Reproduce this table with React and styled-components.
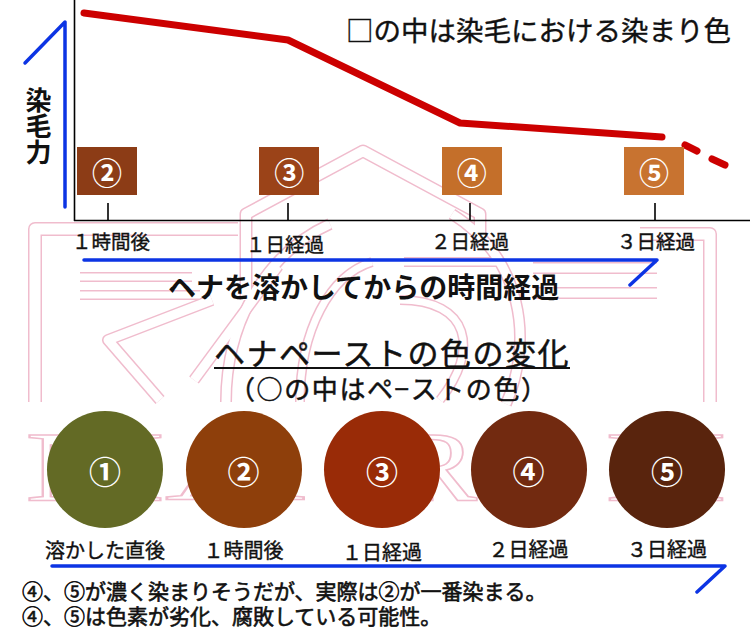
import React from 'react';
import styled, { createGlobalStyle } from 'styled-components';

const GlobalStyle = createGlobalStyle`
    html, body {
        margin: 0;
        padding: 0;
        background: #FFF;
    }
    body {
        font-family: "Noto Sans CJK JP", "Noto Sans", sans-serif;
        color: #111;
    }
`;

const Page = styled.div`
    position: relative;
    width: 750px;
    height: 632px;
    overflow: hidden;
    background: #FFF;
`;

const Watermark = styled.svg`
    position: absolute;
    left: 0;
    top: 0;
    z-index: 0;
`;

const Content = styled.div`
    position: relative;
    z-index: 1;
    display: flex;
    flex-direction: column;
`;

// stacks every child in the same grid cell
const Layered = styled.div`
    display: grid;
    height: ${props => props.$h}px;
    & > * {
        grid-area: 1 / 1;
    }
`;

const Drawing = styled.svg`
    display: block;
`;

const AxisTitle = styled.div`
    justify-self: start;
    align-self: start;
    margin: 87px 0 0 25px;
    writing-mode: vertical-rl;
    font-size: 26px;
    line-height: 1;
    font-weight: 700;
`;

const Legend = styled.div`
    justify-self: end;
    align-self: start;
    margin: 16px 19px 0 0;
    font-size: 27.5px;
    line-height: 1;
    -webkit-text-stroke: 0.4px #111;
`;

const BoxRow = styled.div`
    align-self: start;
    justify-self: start;
    margin: 147px 0 0 77px;
    width: 607px;
    display: flex;
    justify-content: space-between;
`;

const Box = styled.div`
    width: 60px;
    height: 48px;
    background: ${props => props.$color};
    color: #FFF;
    font-size: 30px;
    line-height: 1;
    font-weight: 700;
    display: flex;
    align-items: center;
    justify-content: center;
`;

const TickRow = styled.div`
    display: grid;
    grid-template-columns: 174px 185px 186px auto;
    padding-left: 72px;
    height: 34px;
    font-size: 19.5px;
    line-height: 1;
    -webkit-text-stroke: 0.4px #111;
`;

const TickLabel = styled.div`
    margin-top: ${props => props.$dy}px;
    white-space: nowrap;
`;

const Caption = styled.div`
    align-self: start;
    justify-self: start;
    margin: 16px 0 0 168px;
    font-size: 28px;
    line-height: 1;
    font-weight: 700;
    white-space: nowrap;
`;

const TitleBlock = styled.div`
    display: flex;
    flex-direction: column;
    align-items: flex-start;
    height: 95px;
`;

const PasteTitle = styled.div`
    margin: 26px 0 0 214px;
    font-size: 31px;
    line-height: 1;
    letter-spacing: 1.5px;
    border-bottom: 2px solid #111;
    white-space: nowrap;
    -webkit-text-stroke: 0.5px #111;
`;

const SubTitle = styled.div`
    margin: 6px 0 0 229px;
    font-size: 26px;
    line-height: 1;
    letter-spacing: 1.6px;
    white-space: nowrap;
    -webkit-text-stroke: 0.5px #111;
`;

const CircleRow = styled.div`
    display: flex;
    gap: 22.5px;
    padding-left: 47px;
    margin-top: 6px;
`;

const CircleItem = styled.div`
    width: 116px;
    margin-left: ${props => props.$extra}px;
    display: flex;
    flex-direction: column;
    align-items: center;
`;

const Circle = styled.div`
    width: 116px;
    height: 117px;
    border-radius: 50%;
    background: ${props => props.$color};
    color: #FFF;
    font-size: 32px;
    line-height: 1;
    font-weight: 700;
    display: flex;
    align-items: center;
    justify-content: center;
`;

const CircleLabel = styled.div`
    margin-top: ${props => props.$dy}px;
    font-size: 20px;
    line-height: 24px;
    white-space: nowrap;
    -webkit-text-stroke: 0.4px #111;
`;

const Notes = styled.div`
    align-self: start;
    justify-self: start;
    margin: 14px 0 0 22px;
    font-size: 21px;
    line-height: 25px;
    white-space: nowrap;
    -webkit-text-stroke: 0.6px #111;
`;

const BLUE = '#0c34e4';
const PINK = '#f0bccd';

const boxes = [
    { n: '②', color: '#8c3c16' },
    { n: '③', color: '#9b4318' },
    { n: '④', color: '#c46f2a' },
    { n: '⑤', color: '#c87330' },
];

const ticks = [
    { text: '１時間後', dy: 9 },
    { text: '１日経過', dy: 12 },
    { text: '２日経過', dy: 9 },
    { text: '３日経過', dy: 9 },
];

const pastes = [
    { n: '①', color: '#636a25', label: '溶かした直後', dy: 10, extra: 0 },
    { n: '②', color: '#8e3f0b', label: '１時間後', dy: 10, extra: 0 },
    { n: '③', color: '#992b07', label: '１日経過', dy: 12, extra: 0 },
    { n: '④', color: '#722a10', label: '２日経過', dy: 9, extra: 8 },
    { n: '⑤', color: '#59240d', label: '３日経過', dy: 9, extra: 0 },
];

// bands of the faint logo behind the page
const bands = [
    { d: 'M 35 402 V 229 H 238', w: 14 },
    { d: 'M 710 402 V 234 H 640', w: 14 },
    { d: 'M 246 300 V 214 L 363 151 L 480 214 V 236', w: 13 },
    { d: 'M 80 277 H 192', w: 10 },
    { d: 'M 80 295 H 200', w: 10 },
    { d: 'M 404 262 H 502', w: 10 },
    { d: 'M 533 268 H 657', w: 12 },
    { d: 'M 533 293 H 657', w: 12 },
    { d: 'M 212 300 L 108 340 L 160 400', w: 12 },
    { d: 'M 278 266 L 194 380', w: 12 },
    { d: 'M 226 402 C 226 320 268 252 330 224', w: 12 },
    { d: 'M 300 402 C 300 330 330 275 372 262', w: 10 },
    { d: 'M 452 214 C 522 258 534 340 506 404', w: 12 },
    { d: 'M 400 300 C 470 300 480 350 440 400', w: 10 },
];

const letters = [
    { ch: 'M', x: 25, len: 140 },
    { ch: 'A', x: 165, len: 140 },
    { ch: 'R', x: 395, len: 82 },
    { ch: 'H', x: 605, len: 122 },
];

const Logo = () => (
    <Watermark width="750" height="632" viewBox="0 0 750 632">
        {bands.map((b, i) => (
            <path key={'p' + i} d={b.d} stroke={PINK} strokeWidth={b.w} fill="none" strokeLinejoin="round" />
        ))}
        {bands.map((b, i) => (
            <path key={'w' + i} d={b.d} stroke="#FFF" strokeWidth={b.w - 3} fill="none" strokeLinejoin="round" />
        ))}
        {letters.map(l => (
            <text
                key={l.ch + l.x}
                x={l.x}
                y="500"
                fontFamily="Liberation Serif, serif"
                fontSize="100"
                textLength={l.len}
                lengthAdjust="spacingAndGlyphs"
                fill="none"
                stroke={PINK}
                strokeWidth="1.5"
            >
                {l.ch}
            </text>
        ))}
    </Watermark>
);

const ChartLines = () => (
    <Drawing width="750" height="222" viewBox="0 0 750 222">
        <line x1="74.5" y1="0" x2="74.5" y2="221" stroke="#000" strokeWidth="1.6" />
        <line x1="74" y1="220.5" x2="750" y2="220.5" stroke="#000" strokeWidth="1.6" />
        {[108, 288, 470, 655].map(x => (
            <line key={x} x1={x} y1="203" x2={x} y2="220" stroke="#000" strokeWidth="1.6" />
        ))}
        <polyline points="25,63 65,22 65,207" stroke={BLUE} strokeWidth="3.5" fill="none" strokeLinecap="round" strokeLinejoin="round" />
        <polyline points="84,13 288,40 460,123 662,137" stroke="#cc0000" strokeWidth="7" fill="none" strokeLinecap="round" strokeLinejoin="round" />
        <line x1="685" y1="145" x2="697" y2="151" stroke="#cc0000" strokeWidth="7" strokeLinecap="round" />
        <line x1="712" y1="159" x2="725" y2="165" stroke="#cc0000" strokeWidth="7" strokeLinecap="round" />
    </Drawing>
);

export default function App() {
    return (
        <Page>
            <GlobalStyle />
            <Logo />
            <Content>
                <Layered $h={222}>
                    <ChartLines />
                    <AxisTitle>染毛力</AxisTitle>
                    <Legend>□の中は染毛における染まり色</Legend>
                    <BoxRow>
                        {boxes.map(b => (
                            <Box key={b.n} $color={b.color}>{b.n}</Box>
                        ))}
                    </BoxRow>
                </Layered>

                <TickRow>
                    {ticks.map(t => (
                        <TickLabel key={t.text} $dy={t.dy}>{t.text}</TickLabel>
                    ))}
                </TickRow>

                <Layered $h={54}>
                    <Drawing width="750" height="54" viewBox="0 0 750 54">
                        <polyline points="84,4 657,4 630,29" stroke={BLUE} strokeWidth="3.5" fill="none" strokeLinecap="round" strokeLinejoin="round" />
                    </Drawing>
                    <Caption>ヘナを溶かしてからの時間経過</Caption>
                </Layered>

                <TitleBlock>
                    <PasteTitle>ヘナペーストの色の変化</PasteTitle>
                    <SubTitle>（○の中はペ−ストの色）</SubTitle>
                </TitleBlock>

                <CircleRow>
                    {pastes.map(p => (
                        <CircleItem key={p.n} $extra={p.extra}>
                            <Circle $color={p.color}>{p.n}</Circle>
                            <CircleLabel $dy={p.dy}>{p.label}</CircleLabel>
                        </CircleItem>
                    ))}
                </CircleRow>

                <Layered $h={72}>
                    <Drawing width="750" height="72" viewBox="0 0 750 72">
                        <polyline points="52,2 725,2 697,28" stroke={BLUE} strokeWidth="3.5" fill="none" strokeLinecap="round" strokeLinejoin="round" />
                    </Drawing>
                    <Notes>
                        ④、⑤が濃く染まりそうだが、実際は②が一番染まる。<br />
                        ④、⑤は色素が劣化、腐敗している可能性。
                    </Notes>
                </Layered>
            </Content>
        </Page>
    );
}
